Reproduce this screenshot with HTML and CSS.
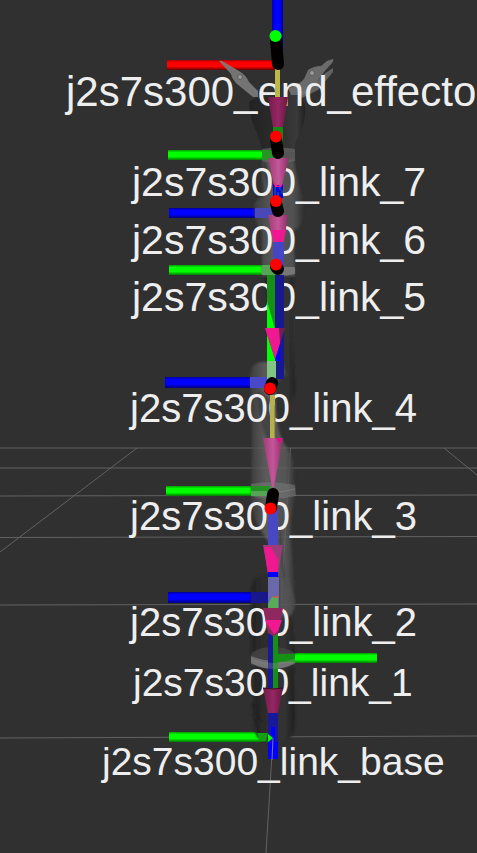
FILE: index.html
```
<!DOCTYPE html>
<html lang="en">
<head>
<meta charset="utf-8">
<meta name="viewport" content="width=device-width, initial-scale=1">
<title>j2s7s300 transform frames</title>
<link rel="stylesheet" href="styles.css">
</head>
<body>
<main class="viewport">
<svg class="scene" viewBox="0 0 477 853" role="img" aria-label="Robot arm link frames">
  <defs>
    <linearGradient id="redBar" x2="0" y2="1"><stop offset="0" stop-color="#a00"/><stop offset=".25" stop-color="#f00"/><stop offset=".65" stop-color="#f00"/><stop offset="1" stop-color="#600"/></linearGradient>
    <linearGradient id="greenBar" x2="0" y2="1"><stop offset="0" stop-color="#090"/><stop offset=".25" stop-color="#0f0"/><stop offset=".65" stop-color="#0f0"/><stop offset="1" stop-color="#070"/></linearGradient>
    <linearGradient id="blueBar" x2="0" y2="1"><stop offset="0" stop-color="#009"/><stop offset=".25" stop-color="#00f"/><stop offset=".65" stop-color="#00f"/><stop offset="1" stop-color="#007"/></linearGradient>
    <linearGradient id="blueRod"><stop offset="0" stop-color="#00b"/><stop offset=".3" stop-color="#00f"/><stop offset=".75" stop-color="#00f"/><stop offset="1" stop-color="#008"/></linearGradient>
    <linearGradient id="hand"><stop offset="0" stop-color="#222"/><stop offset=".5" stop-color="#2c2c2c"/><stop offset=".85" stop-color="#3a3a3a"/><stop offset="1" stop-color="#202020"/></linearGradient>
    <linearGradient id="shell"><stop offset="0" stop-color="#404040"/><stop offset=".35" stop-color="#686868"/><stop offset=".8" stop-color="#5e5e5e"/><stop offset="1" stop-color="#363636"/></linearGradient>
    <linearGradient id="darkShell"><stop offset="0" stop-color="#222"/><stop offset=".3" stop-color="#2c2c2c"/><stop offset=".75" stop-color="#343434"/><stop offset="1" stop-color="#202020"/></linearGradient>
    <linearGradient id="cone"><stop offset="0" stop-color="#a03c74"/><stop offset=".5" stop-color="#c4569a"/><stop offset="1" stop-color="#8c3066"/></linearGradient>
    <linearGradient id="darkCone"><stop offset="0" stop-color="#701c48"/><stop offset=".5" stop-color="#962664"/><stop offset="1" stop-color="#68183e"/></linearGradient>
    <filter id="soft"><feGaussianBlur stdDeviation="1"/></filter>
  </defs>

  <!-- ground grid -->
  <g class="grid">
    <path d="M0 448H477M0 468H477M0 496L477 495M0 537.500L477 536.500M0 605L477 604M0 738L477 736"/>
    <path d="M137 448L0 552M444 448L477 475M290.500 448L273 738L266 853"/>
  </g>

  <!-- horizontal axes -->
  <rect x="167" y="60" width="111" height="10" fill="url(#redBar)"/>
  <rect x="168" y="150" width="108" height="10" fill="url(#greenBar)"/>
  <rect x="169" y="208" width="108" height="10" fill="url(#blueBar)"/>
  <rect x="169" y="265" width="108" height="10" fill="url(#greenBar)"/>
  <rect x="165" y="377" width="105" height="11" fill="url(#blueBar)"/>
  <rect x="166" y="486" width="106" height="10" fill="url(#greenBar)"/>
  <rect x="168" y="592" width="104" height="11" fill="url(#blueBar)"/>
  <rect x="279" y="653" width="98" height="10" fill="url(#greenBar)"/>
  <rect x="169" y="732" width="102" height="10" fill="url(#greenBar)"/>

  <!-- gripper -->
  <path d="M249 102Q252 98 262 97L288 94Q304 95 305 106Q306 122 299 135Q294 143 294 152H262Q261 143 257 133Q249 117 249 102Z" fill="url(#hand)"/>
  <path d="M219 61Q221 60 224 62L239 71Q246 75 249 82L258 91V97L253 97L237 84Q232 79 231 74Z" fill="#808080" opacity=".85"/>
  <path d="M333 59Q334 60 332 63L324 72Q319 79 315 84L304 95H291L288 88Q298 86 304 79L308 70Q314 66 321 66L327 61Z" fill="#757575" opacity=".85"/>
  <path d="M333 68L333 72L318 90L302 98L299 94L314 84L324 74Z" fill="#777" opacity=".7"/>
  <circle cx="240" cy="77" r="2.500" fill="#999" stroke="#5c5c5c"/><circle cx="312" cy="73" r="2.500" fill="#999" stroke="#5c5c5c"/>

  <!-- arm meshes -->
  <g filter="url(#soft)">
    <path d="M262 160H294Q297 182 302 195Q304 214 301 225Q298 230 294 229L295 276H262V232Q254 224 254 208Q254 199 264 196L262 176Z" fill="url(#shell)" opacity=".72"/>
    <path d="M265 160Q268 175 276 184L270 190Q263 175 263 162Z" fill="#2c2c2c" opacity=".6"/>
    <path d="M264 277H294Q290 318 291 338Q295 370 295 390Q294 404 284 405H274L275 372L268 300Z" fill="url(#darkShell)"/>
    <path d="M250 376Q251 363 261 362H282L286 375L276 384V409Q278 436 286 446Q295 458 295 485V498H251L252 432Z" fill="url(#shell)" opacity=".78"/>
    <path d="M275 370L285 373L284 403H275Z" fill="#333" opacity=".6"/>
    <path d="M258 390Q256 420 272 450L275 433L270 400Z" fill="#333" opacity=".55"/>
    <path d="M251 497H295Q288 525 292 552L295 602Q295 616 285 618H274L270 544Q251 520 251 497Z" fill="url(#shell)" opacity=".75"/>
    <path d="M283 497Q278 544 288 593L283 580L279 540Z" fill="#303030" opacity=".6"/>
    <path d="M251 590Q251 576 263 576H280V615H292L295 654H251Z" fill="url(#darkShell)" opacity=".92"/>
    <path d="M278 577H288L295 600Q295 616 285 618H278Z" fill="#555" opacity=".6"/>
    <path d="M254 667H294L295 725Q294 740 282 741H263Q255 738 254 725L252 704L254 700Z" fill="url(#darkShell)"/>
  </g>
  <g>
    <path d="M262 149Q278 146 295 149V161Q278 165 262 161Z" fill="#777" opacity=".55"/>
    <path d="M261 267H295V274Q278 278 261 274Z" fill="#8c8c8c" opacity=".65"/>
    <path d="M251 484Q273 480 295 485L296 496Q273 501 251 496Z" fill="#777" opacity=".6"/>
    <path d="M251 490Q273 495 295 489" fill="none" stroke="#888" opacity=".6"/>
    <path d="M257 690V725Q258 736 263 739M252 704L258 707V720M255 713L263 722" fill="none" stroke="#202020"/>
    <ellipse cx="273" cy="656" rx="22" ry="9" fill="#4c4c4c" opacity=".65"/>
    <path d="M251 656Q273 665 295 656V663Q273 675 251 663Z" fill="#888" opacity=".6"/>
  </g>

  <!-- axes seen through the meshes -->
  <path d="M262 150H275V160H262Z" fill="#289428"/>
  <path d="M255 208H275V218H255Z" fill="#4848b8"/>
  <path d="M262 265H275V275H262Z" fill="#56a456"/>
  <path d="M250 377H269V388H250Z" fill="#4848c8"/>
  <path d="M251 486H270V491H251Z" fill="#249024"/><path d="M251 491H270V496H251Z" fill="#55a455"/>
  <path d="M251 592H269V603H251Z" fill="#18188c"/>
  <path d="M277 654H295V662H277Z" fill="#169016"/>
  <path d="M257 733H268L266 741H260Z" fill="#12a012"/>

  <!-- frame names -->
  <g class="labels">
    <text class="nearest" x="66" y="106">j2s7s300_end_effecto</text>
    <text class="near" x="132" y="196">j2s7s300_link_7</text>
    <text class="near" x="132" y="254">j2s7s300_link_6</text>
    <text class="near" x="132" y="311">j2s7s300_link_5</text>
    <text class="mid" x="130" y="422">j2s7s300_link_4</text>
    <text class="mid" x="130" y="530">j2s7s300_link_3</text>
    <text class="mid" x="130" y="636">j2s7s300_link_2</text>
    <text class="far" x="133" y="696">j2s7s300_link_1</text>
    <text class="far" x="102" y="775">j2s7s300_link_base</text>
  </g>

  <!-- vertical axes and parent arrows -->
  <g>
    <rect x="272" y="0" width="11" height="58" fill="url(#blueRod)"/>
    <rect x="275" y="68" width="5" height="30" fill="#bdb84a"/>
    <path d="M273 126H283V150H273Z" fill="#168816"/>
    <path d="M268 97H288L283 127H273Z" fill="url(#darkCone)"/>
    <path d="M273 184H283V198H273Z" fill="#0505e0"/><path d="M275 187V196M280 185V190M278 192V197M282 190V194" stroke="#207c70" stroke-width="1"/>
    <path d="M268 158H289L282 185H274Z" fill="url(#cone)"/><path d="M273 182L278 186L283 184L281 187H275Z" fill="#ff1890"/>
    <path d="M273 242H284V266H273Z" fill="#4646c4"/>
    <path d="M268 215H288L284 242H273Z" fill="url(#cone)"/><path d="M271 230H286L283 242H274Z" fill="#f01890"/>
    <path d="M267 275H275V329H267Z" fill="#159015"/><path d="M275 275H284V379H275Z" fill="#18188f"/>
    <path d="M267 301L275 329V362H267Z" fill="#0f0"/><path d="M275 329H280V361H275Z" fill="#00f"/>
    <path d="M267 361H276V382H267Z" fill="#82c482"/>
    <path d="M265 328H285L275 359Z" fill="#6e2050"/><path d="M265 328H279L280 343L275 359Z" fill="#f01890"/>
    <path d="M270 395H275V439H270Z" fill="#b5b052"/><path d="M275 405V438" stroke="#77733a"/>
    <path d="M263 438H283L274 487H272Z" fill="url(#cone)"/><path d="M275 438H283L281 444Z" fill="#d81482"/>
    <path d="M268 509H278V547H268Z" fill="#4848c4"/>
    <path d="M263 545H283L278 574H268Z" fill="#9a3c78"/><path d="M264 547H271L278 560V574H268Z" fill="#f01890"/>
    <path d="M268 572H278V577H268Z" fill="#00f"/>
    <path d="M268 577H279V608H268Z" fill="#6868aa"/><path d="M268 604L272 597H278V608H268Z" fill="#58ac58"/><path d="M273 597H279" stroke="#b46652" stroke-width="2"/>
    <path d="M268 633H273V689H268Z" fill="#18189a"/><path d="M273 633H278V654H295V660H278V689H273Z" fill="#159015"/>
    <path d="M263 608H283L278 634L273 636L268 633Z" fill="#8e285e"/><path d="M265 620L282 620L278 631L274 634L267 624Z" fill="#f01890"/>
    <path d="M268 712H278V742H268Z" fill="#18189a"/><path d="M271 727H275V742H278V759H268V742H271Z" fill="#00f"/>
    <path d="M263 688H283L278 713H268Z" fill="url(#darkCone)"/>
    <path d="M263 688Q273 690 283 688" stroke="#321020" fill="none"/>
    <path d="M268 734L273 738L268 742Z" fill="#0f0"/><path d="M273 738L272 760" stroke="#77a"/>
    <path d="M251 658Q273 668 295 658V664Q273 674 251 664Z" fill="#999" opacity=".28"/>
  </g>

  <!-- foreshortened axes pointing at the camera -->
  <g class="stub">
    <path d="M276 40L278 64"/><path d="M276 139L278 153"/><path d="M276 203L278 211"/><path d="M276 267L278 269"/><path d="M272 383L270 389"/><path d="M273 494L271 508"/>
  </g>
  <circle cx="275.500" cy="36" r="6" fill="#0f0"/>
  <g fill="#f00">
    <circle cx="276" cy="136.500" r="6"/><circle cx="276" cy="201" r="6"/><circle cx="276" cy="264.500" r="6"/><circle cx="270" cy="388.500" r="6"/><circle cx="270.500" cy="508.500" r="6"/>
  </g>
</svg>
</main>
</body>
</html>
```
FILE: styles.css
```
body {
  margin: 0;
  background: #303030;
}

.viewport {
  width: 100%;
}

.scene {
  display: block;
  width: 100%;
  height: auto;
}

.grid {
  fill: none;
  stroke: #626262;
  stroke-width: 1;
}

.labels {
  fill: #eee;
  font-family: "Liberation Sans", Arial, sans-serif;
}

.nearest {
  font-size: 42px;
}

.near {
  font-size: 41px;
}

.mid {
  font-size: 40px;
}

.far {
  font-size: 39px;
}

.stub {
  fill: none;
  stroke: #050000;
  stroke-width: 12;
  stroke-linecap: round;
}
```
